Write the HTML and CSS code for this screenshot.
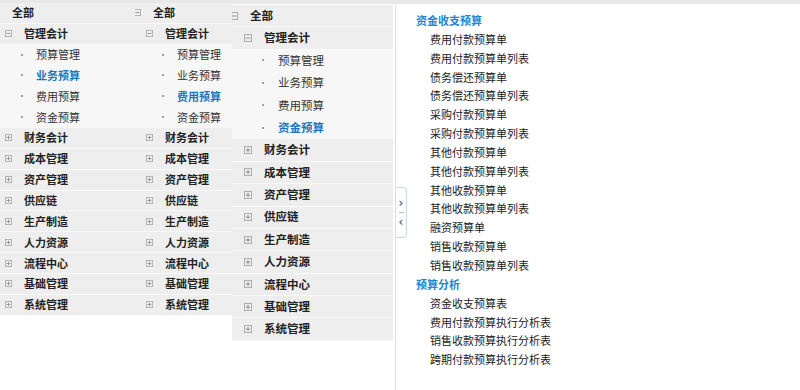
FILE: index.html
```html
<!DOCTYPE html>
<html lang="zh-CN">
<head>
  <meta charset="UTF-8">
  <title>预算菜单</title>
  <link rel="stylesheet" href="styles.css">
</head>
<body>
  <div class="page">
    <!-- 菜单一 -->
    <div class="tree tree-a">
      <ul class="root">
        <li class="row lv0"><svg class="ico" viewBox="0 0 9 9"><rect x=".5" y=".5" width="8" height="8"/><path d="M2 4.5h5"/></svg><span>全部</span></li>
        <li class="row lv1"><svg class="ico" viewBox="0 0 9 9"><rect x=".5" y=".5" width="8" height="8"/><path d="M2 4.5h5"/></svg><span>管理会计</span></li>
        <li class="row lv2"><i class="dot"></i><span>预算管理</span></li>
        <li class="row lv2 on"><i class="dot"></i><span>业务预算</span></li>
        <li class="row lv2"><i class="dot"></i><span>费用预算</span></li>
        <li class="row lv2"><i class="dot"></i><span>资金预算</span></li>
        <li class="row lv1"><svg class="ico" viewBox="0 0 9 9"><rect x=".5" y=".5" width="8" height="8"/><path d="M2 4.5h5M4.5 2v5"/></svg><span>财务会计</span></li>
        <li class="row lv1"><svg class="ico" viewBox="0 0 9 9"><rect x=".5" y=".5" width="8" height="8"/><path d="M2 4.5h5M4.5 2v5"/></svg><span>成本管理</span></li>
        <li class="row lv1"><svg class="ico" viewBox="0 0 9 9"><rect x=".5" y=".5" width="8" height="8"/><path d="M2 4.5h5M4.5 2v5"/></svg><span>资产管理</span></li>
        <li class="row lv1"><svg class="ico" viewBox="0 0 9 9"><rect x=".5" y=".5" width="8" height="8"/><path d="M2 4.5h5M4.5 2v5"/></svg><span>供应链</span></li>
        <li class="row lv1"><svg class="ico" viewBox="0 0 9 9"><rect x=".5" y=".5" width="8" height="8"/><path d="M2 4.5h5M4.5 2v5"/></svg><span>生产制造</span></li>
        <li class="row lv1"><svg class="ico" viewBox="0 0 9 9"><rect x=".5" y=".5" width="8" height="8"/><path d="M2 4.5h5M4.5 2v5"/></svg><span>人力资源</span></li>
        <li class="row lv1"><svg class="ico" viewBox="0 0 9 9"><rect x=".5" y=".5" width="8" height="8"/><path d="M2 4.5h5M4.5 2v5"/></svg><span>流程中心</span></li>
        <li class="row lv1"><svg class="ico" viewBox="0 0 9 9"><rect x=".5" y=".5" width="8" height="8"/><path d="M2 4.5h5M4.5 2v5"/></svg><span>基础管理</span></li>
        <li class="row lv1"><svg class="ico" viewBox="0 0 9 9"><rect x=".5" y=".5" width="8" height="8"/><path d="M2 4.5h5M4.5 2v5"/></svg><span>系统管理</span></li>
      </ul>
    </div>

    <!-- 菜单二 -->
    <div class="tree tree-b">
      <ul class="root">
        <li class="row lv0"><svg class="ico" viewBox="0 0 9 9"><rect x=".5" y=".5" width="8" height="8"/><path d="M2 4.5h5"/></svg><span>全部</span></li>
        <li class="row lv1"><svg class="ico" viewBox="0 0 9 9"><rect x=".5" y=".5" width="8" height="8"/><path d="M2 4.5h5"/></svg><span>管理会计</span></li>
        <li class="row lv2"><i class="dot"></i><span>预算管理</span></li>
        <li class="row lv2"><i class="dot"></i><span>业务预算</span></li>
        <li class="row lv2 on"><i class="dot"></i><span>费用预算</span></li>
        <li class="row lv2"><i class="dot"></i><span>资金预算</span></li>
        <li class="row lv1"><svg class="ico" viewBox="0 0 9 9"><rect x=".5" y=".5" width="8" height="8"/><path d="M2 4.5h5M4.5 2v5"/></svg><span>财务会计</span></li>
        <li class="row lv1"><svg class="ico" viewBox="0 0 9 9"><rect x=".5" y=".5" width="8" height="8"/><path d="M2 4.5h5M4.5 2v5"/></svg><span>成本管理</span></li>
        <li class="row lv1"><svg class="ico" viewBox="0 0 9 9"><rect x=".5" y=".5" width="8" height="8"/><path d="M2 4.5h5M4.5 2v5"/></svg><span>资产管理</span></li>
        <li class="row lv1"><svg class="ico" viewBox="0 0 9 9"><rect x=".5" y=".5" width="8" height="8"/><path d="M2 4.5h5M4.5 2v5"/></svg><span>供应链</span></li>
        <li class="row lv1"><svg class="ico" viewBox="0 0 9 9"><rect x=".5" y=".5" width="8" height="8"/><path d="M2 4.5h5M4.5 2v5"/></svg><span>生产制造</span></li>
        <li class="row lv1"><svg class="ico" viewBox="0 0 9 9"><rect x=".5" y=".5" width="8" height="8"/><path d="M2 4.5h5M4.5 2v5"/></svg><span>人力资源</span></li>
        <li class="row lv1"><svg class="ico" viewBox="0 0 9 9"><rect x=".5" y=".5" width="8" height="8"/><path d="M2 4.5h5M4.5 2v5"/></svg><span>流程中心</span></li>
        <li class="row lv1"><svg class="ico" viewBox="0 0 9 9"><rect x=".5" y=".5" width="8" height="8"/><path d="M2 4.5h5M4.5 2v5"/></svg><span>基础管理</span></li>
        <li class="row lv1"><svg class="ico" viewBox="0 0 9 9"><rect x=".5" y=".5" width="8" height="8"/><path d="M2 4.5h5M4.5 2v5"/></svg><span>系统管理</span></li>
      </ul>
    </div>

    <!-- 菜单三 -->
    <div class="tree tree-c">
      <ul class="root">
        <li class="row lv0"><svg class="ico" viewBox="0 0 9 9"><rect x=".5" y=".5" width="8" height="8"/><path d="M2 4.5h5"/></svg><span>全部</span></li>
        <li class="row lv1"><svg class="ico" viewBox="0 0 9 9"><rect x=".5" y=".5" width="8" height="8"/><path d="M2 4.5h5"/></svg><span>管理会计</span></li>
        <li class="row lv2"><i class="dot"></i><span>预算管理</span></li>
        <li class="row lv2"><i class="dot"></i><span>业务预算</span></li>
        <li class="row lv2"><i class="dot"></i><span>费用预算</span></li>
        <li class="row lv2 on"><i class="dot"></i><span>资金预算</span></li>
        <li class="row lv1"><svg class="ico" viewBox="0 0 9 9"><rect x=".5" y=".5" width="8" height="8"/><path d="M2 4.5h5M4.5 2v5"/></svg><span>财务会计</span></li>
        <li class="row lv1"><svg class="ico" viewBox="0 0 9 9"><rect x=".5" y=".5" width="8" height="8"/><path d="M2 4.5h5M4.5 2v5"/></svg><span>成本管理</span></li>
        <li class="row lv1"><svg class="ico" viewBox="0 0 9 9"><rect x=".5" y=".5" width="8" height="8"/><path d="M2 4.5h5M4.5 2v5"/></svg><span>资产管理</span></li>
        <li class="row lv1"><svg class="ico" viewBox="0 0 9 9"><rect x=".5" y=".5" width="8" height="8"/><path d="M2 4.5h5M4.5 2v5"/></svg><span>供应链</span></li>
        <li class="row lv1"><svg class="ico" viewBox="0 0 9 9"><rect x=".5" y=".5" width="8" height="8"/><path d="M2 4.5h5M4.5 2v5"/></svg><span>生产制造</span></li>
        <li class="row lv1"><svg class="ico" viewBox="0 0 9 9"><rect x=".5" y=".5" width="8" height="8"/><path d="M2 4.5h5M4.5 2v5"/></svg><span>人力资源</span></li>
        <li class="row lv1"><svg class="ico" viewBox="0 0 9 9"><rect x=".5" y=".5" width="8" height="8"/><path d="M2 4.5h5M4.5 2v5"/></svg><span>流程中心</span></li>
        <li class="row lv1"><svg class="ico" viewBox="0 0 9 9"><rect x=".5" y=".5" width="8" height="8"/><path d="M2 4.5h5M4.5 2v5"/></svg><span>基础管理</span></li>
        <li class="row lv1"><svg class="ico" viewBox="0 0 9 9"><rect x=".5" y=".5" width="8" height="8"/><path d="M2 4.5h5M4.5 2v5"/></svg><span>系统管理</span></li>
      </ul>
    </div>

    <!-- 分隔条 -->
    <div class="splitter">
      <div class="toggle">
        <span class="arr">&rsaquo;</span>
        <i class="bar"></i>
        <span class="arr">&lsaquo;</span>
      </div>
    </div>

    <!-- 右侧功能列表 -->
    <div class="content">
      <h3>资金收支预算</h3>
      <ul>
        <li>费用付款预算单</li>
        <li>费用付款预算单列表</li>
        <li>债务偿还预算单</li>
        <li>债务偿还预算单列表</li>
        <li>采购付款预算单</li>
        <li>采购付款预算单列表</li>
        <li>其他付款预算单</li>
        <li>其他付款预算单列表</li>
        <li>其他收款预算单</li>
        <li>其他收款预算单列表</li>
        <li>融资预算单</li>
        <li>销售收款预算单</li>
        <li>销售收款预算单列表</li>
      </ul>
      <h3>预算分析</h3>
      <ul>
        <li>资金收支预算表</li>
        <li>费用付款预算执行分析表</li>
        <li>销售收款预算执行分析表</li>
        <li>跨期付款预算执行分析表</li>
      </ul>
    </div>
  </div>
</body>
</html>
```

FILE: styles.css
```css
*{
  margin: 0;
  padding: 0;
}
body{
  font-family: "Noto Sans CJK SC", "Noto Sans", sans-serif;
  color: #222;
  background: #fff;
}
ul{
  list-style: none;
}

.page{
  display: flex;
  align-items: flex-start;
  height: 390px;
  border-top: 4px solid #e8e8e8;
  box-sizing: border-box;
}

/* 树形菜单 */
.tree{
  --row: 20.85px;
  --fs: 11px;
  --ind: 12px;
  --ico: 7px;
  --off: -7px;
  overflow: hidden;
  flex: none;
  font-size: var(--fs);
}
.tree-a{
  width: 135px;
  margin-top: -1px;
}
.tree-b{
  width: 97px;
  margin-top: -1px;
  --off: -1px;
}
.tree-c{
  width: 161px;
  margin-top: 1px;
  --row: 22.4px;
  --fs: 11.5px;
  --ind: 14px;
  --ico: 8px;
  --off: -2px;
}
.tree .root{
  margin-left: var(--off);
}
.row{
  display: flex;
  align-items: center;
  gap: 12px;
  height: calc(var(--row) - 1px);
  border-bottom: 1px solid #fafafa;
  background: #eeeeee;
  font-weight: bold;
  white-space: nowrap;
  line-height: 1;
}
.lv1{
  padding-left: var(--ind);
}
.lv2{
  padding-left: calc(var(--ind) * 2);
  background: #f7f7f7;
  border-bottom-color: #f7f7f7;
  font-weight: normal;
  color: #333;
}
.row.on{
  color: #1a78c2;
  font-weight: bold;
}
.ico{
  flex: none;
  width: var(--ico);
  height: var(--ico);
  fill: none;
  stroke: #a8a8a8;
  stroke-width: 1;
}
.ico path{
  stroke: #8a8a8a;
}
.dot{
  flex: none;
  width: var(--ico);
  height: 2px;
  position: relative;
}
.dot:after{
  content: '';
  position: absolute;
  left: 4px;
  top: 0;
  width: 2px;
  height: 2px;
  background: #a0a0a0;
}

/* 分隔条 */
.splitter{
  flex: none;
  align-self: stretch;
  width: 1px;
  margin-left: 2px;
  background: #dedede;
  position: relative;
}
.toggle{
  position: absolute;
  left: 1px;
  top: 183px;
  width: 10px;
  height: 49px;
  border: 1px solid #c6dbee;
  border-left: none;
  border-radius: 0 4px 4px 0;
  background: #fbfdff;
  display: flex;
  flex-direction: column;
  align-items: center;
  justify-content: center;
  gap: 1px;
  font-family: "DejaVu Sans", sans-serif;
  font-size: 12px;
  color: #444;
  line-height: 12px;
}
.toggle .bar{
  width: 5px;
  height: 1px;
  background: #bbb;
  margin: 2px 0;
}

/* 右侧列表 */
.content{
  padding: 7px 0 0 20px;
  font-size: 11px;
  line-height: 18.85px;
}
.content h3{
  font-size: 11px;
  color: #2286d0;
  font-weight: bold;
}
.content li{
  padding-left: 14px;
  color: #222;
}
```
